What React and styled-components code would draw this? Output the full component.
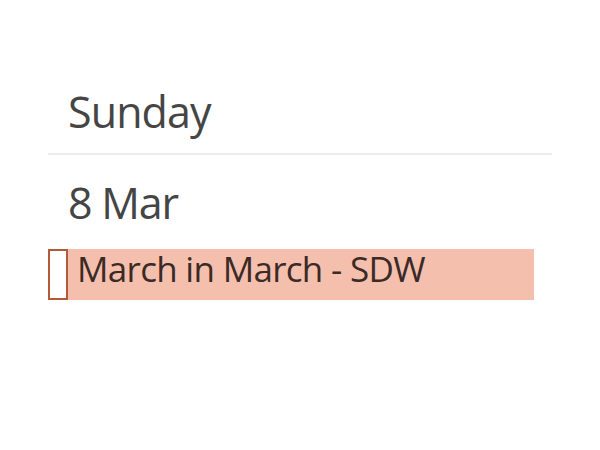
import styled, { createGlobalStyle } from "styled-components";

const GlobalStyle = createGlobalStyle`
  html, body {
    margin: 0;
    background: #ffffff;
  }
  body {
    font-family: "Open Sans", "Noto Sans", sans-serif;
  }
`;

const Page = styled.div`
  width: 504px;
  padding: 87px 0 0 48px;
`;

const DayHeader = styled.div`
  padding: 0 0 16px 20px;
  border-bottom: 2px solid #ececec;
  font-size: 43px;
  line-height: 50px;
  color: #454545;
  letter-spacing: -0.9px;
`;

const DateLabel = styled.div`
  margin-top: 23px;
  padding-left: 20px;
  font-size: 43px;
  line-height: 50px;
  color: #454545;
  letter-spacing: -1.2px;
`;

const EventBar = styled.div`
  display: flex;
  align-items: stretch;
  width: 486px;
  height: 51px;
  margin-top: 21px;
  background: ${(props) => props.tint};
`;

const StatusBox = styled.div`
  width: 20px;
  box-sizing: border-box;
  border: 2px solid ${(props) => props.edge};
  background: #ffffff;
`;

const EventTitle = styled.span`
  padding-left: 9px;
  font-size: 35px;
  line-height: 40px;
  font-weight: 500;
  color: #3b2a25;
  letter-spacing: -0.7px;
`;

function App() {
  return (
    <Page>
      <GlobalStyle />
      <DayHeader>Sunday</DayHeader>
      <DateLabel>8 Mar</DateLabel>
      <EventBar tint="#f5bfae">
        <StatusBox edge="#b45a3a" />
        <EventTitle>March in March - SDW</EventTitle>
      </EventBar>
    </Page>
  );
}

export default App;
